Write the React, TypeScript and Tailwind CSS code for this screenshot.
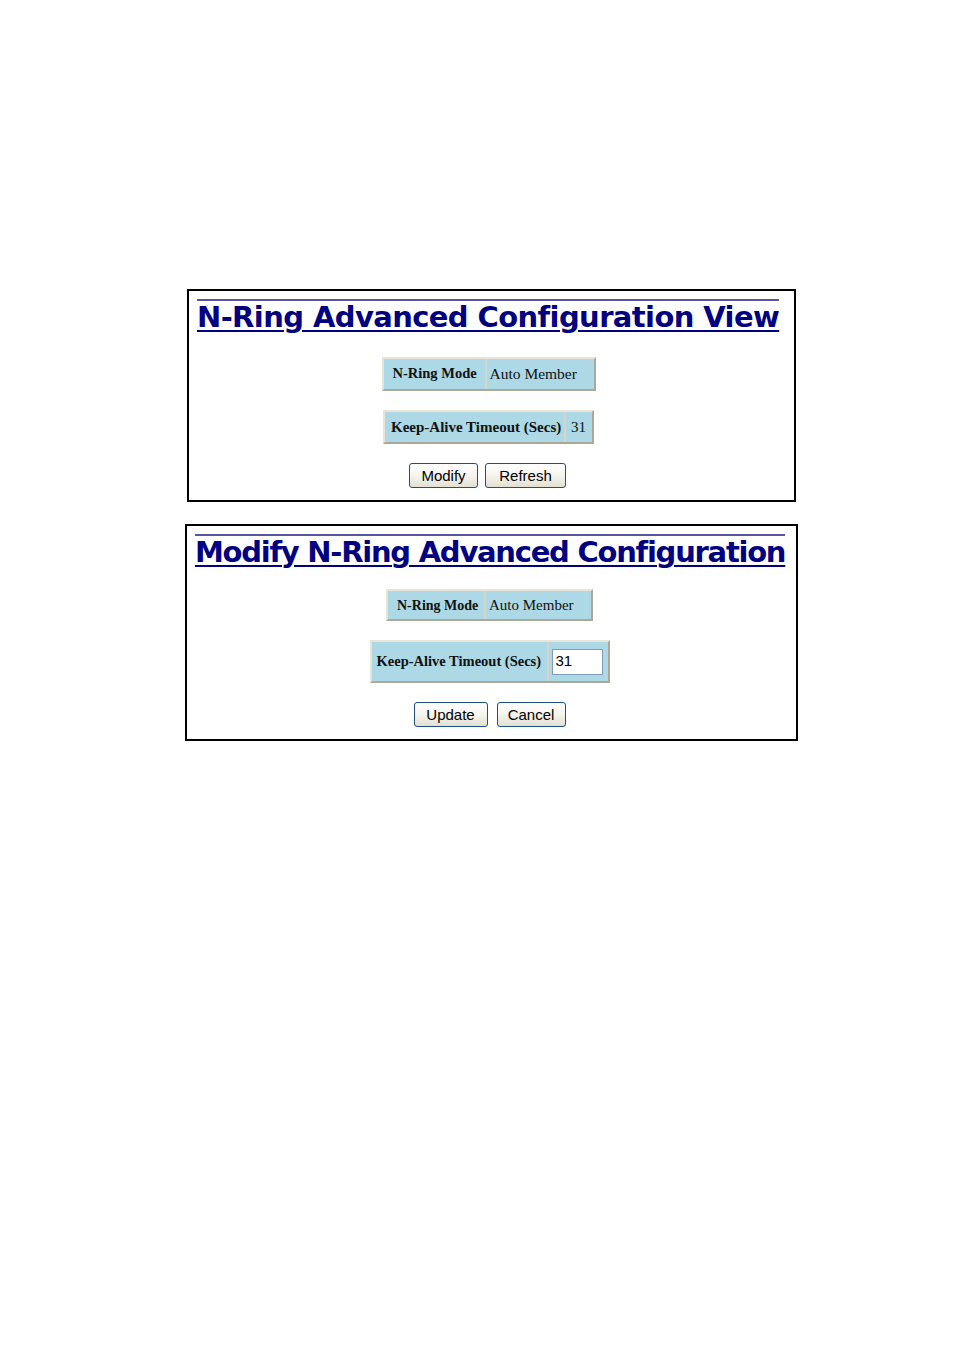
import React from "react";

const serif = { fontFamily: '"Liberation Serif", "Times New Roman", serif' };
const verd = { fontFamily: '"DejaVu Sans", Verdana, sans-serif' };
const arial = { fontFamily: '"Liberation Sans", Arial, sans-serif' };

function Title({ text, track }: { text: string; track: string }) {
  return (
    <div className="flex">
      <div className="border-t-2 border-[#5656a6]">
        <div
          style={verd}
          className={`text-[29px] leading-[30px] font-bold text-[#000080] underline decoration-[2px] underline-offset-[3px] whitespace-nowrap pt-[1px] ${track}`}
        >
          {text}
        </div>
      </div>
    </div>
  );
}

function Btn({ label, w }: { label: string; w: string }) {
  return (
    <button
      style={arial}
      className={`${w} h-[25px] rounded-[3px] border border-[#1c5180] bg-gradient-to-b from-white via-[#f5f4ee] to-[#e3e0d2] text-[15px] text-black leading-none`}
    >
      {label}
    </button>
  );
}

const tableBorder =
  "border-2 border-t-[#e8e5d8] border-l-[#e8e5d8] border-r-[#aca899] border-b-[#aca899] bg-[#add8e6] flex";
const sep = "border-l-2 border-l-[#d9d5c6]";

export default function App() {
  return (
    <div className="min-h-[1351px] w-[954px] bg-white pt-[289px]">
      {/* Box 1 */}
      <div className="ml-[187px] w-[609px] h-[213px] border-2 border-black px-[8px] pt-[8px]">
        <Title text="N-Ring Advanced Configuration View" track="tracking-[-0.6px]" />
        <div className="pr-[6px] flex flex-col items-center">
          <div className={`${tableBorder} mt-[25px] h-[34px]`} style={serif}>
            <div className="w-[101px] pl-[9px] flex items-center whitespace-nowrap text-[14.5px] font-bold text-[#111]">N-Ring Mode</div>
            <div className={`w-[109px] pl-[3px] flex items-center whitespace-nowrap text-[15.5px] text-[#111] ${sep}`}>Auto Member</div>
          </div>
          <div className={`${tableBorder} mt-[19px] h-[34px]`} style={serif}>
            <div className="w-[179px] pl-[6px] flex items-center whitespace-nowrap text-[15px] font-bold text-[#111]">Keep-Alive Timeout (Secs)</div>
            <div className={`w-[28px] pl-[5px] flex items-center text-[15px] text-[#111] ${sep}`}>31</div>
          </div>
          <div className="mt-[19px] flex gap-[7px] pr-[2px]">
            <Btn label="Modify" w="w-[69px]" />
            <Btn label="Refresh" w="w-[81px]" />
          </div>
        </div>
      </div>

      {/* Box 2 */}
      <div className="mt-[22px] ml-[185px] w-[613px] h-[217px] border-2 border-black px-[8px] pt-[8px]">
        <Title text="Modify N-Ring Advanced Configuration" track="tracking-[-1.25px]" />
        <div className="pr-[4px] flex flex-col items-center">
          <div className={`${tableBorder} mt-[22px] h-[32px]`} style={serif}>
            <div className="w-[96px] pl-[9px] flex items-center whitespace-nowrap text-[14px] font-bold text-[#111]">N-Ring Mode</div>
            <div className={`w-[107px] pl-[3px] flex items-center whitespace-nowrap text-[15px] text-[#111] ${sep}`}>Auto Member</div>
          </div>
          <div className={`${tableBorder} mt-[19px] h-[43px]`} style={serif}>
            <div className="w-[175px] pl-[5px] flex items-center whitespace-nowrap text-[14.5px] font-bold text-[#111]">Keep-Alive Timeout (Secs)</div>
            <div className={`w-[61px] pl-[3px] flex items-center ${sep}`}>
              <div
                style={arial}
                className="w-[51px] h-[26px] bg-white border border-[#7f9db9] pl-[3px] flex items-center text-[15px] text-black"
              >
                31
              </div>
            </div>
          </div>
          <div className="mt-[19px] flex gap-[9px]">
            <Btn label="Update" w="w-[74px]" />
            <Btn label="Cancel" w="w-[69px]" />
          </div>
        </div>
      </div>
    </div>
  );
}
